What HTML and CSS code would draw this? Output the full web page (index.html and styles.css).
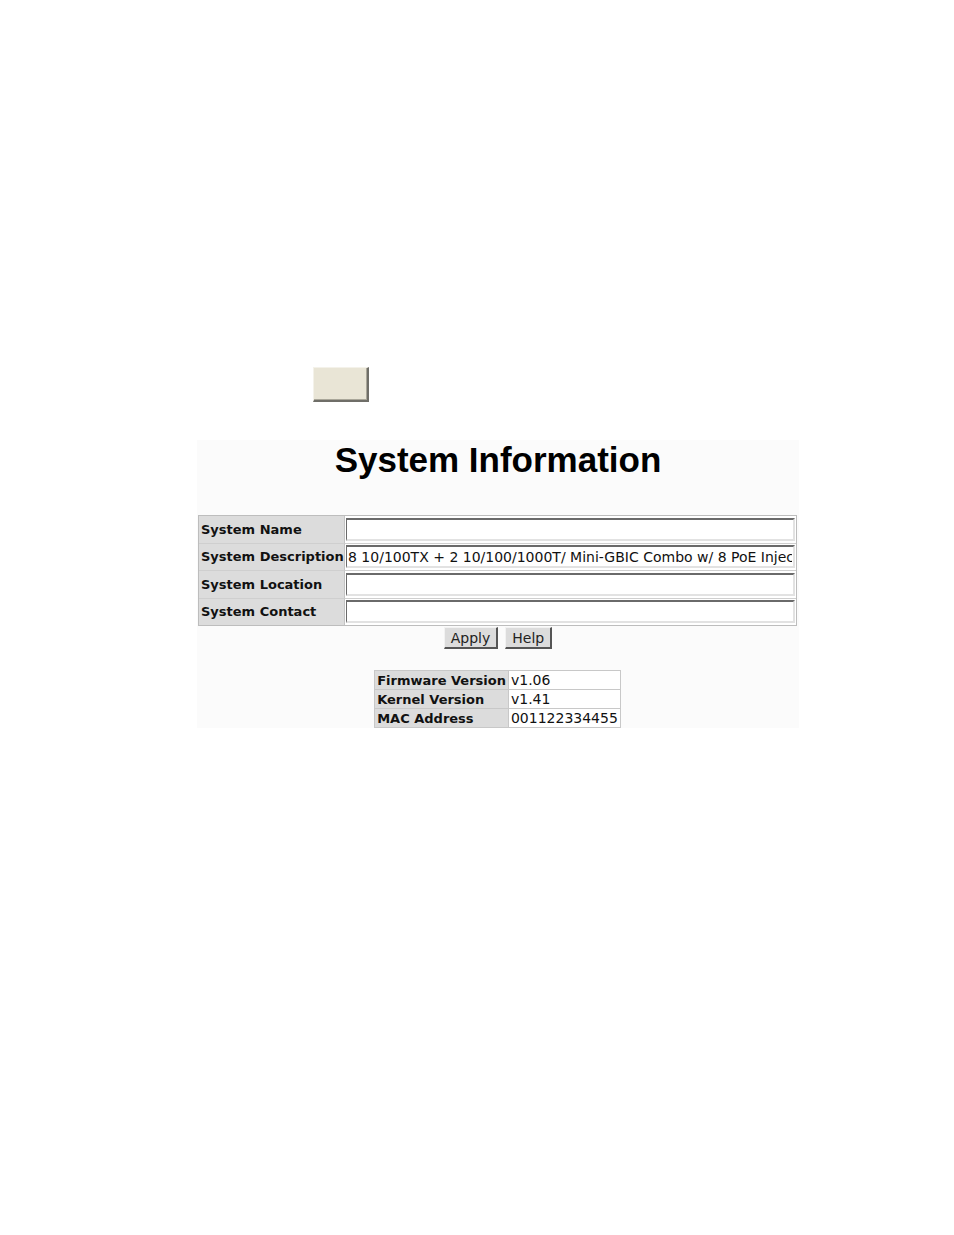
FILE: index.html
```html
<!DOCTYPE html>
<html>
<head>
<meta charset="utf-8">
<link rel="stylesheet" href="styles.css">
</head>
<body>
<div class="page">
  <div class="top-row"><button class="blank-btn" type="button"></button></div>
  <div class="panel">
    <h1 class="title">System Information</h1>
    <table class="sys">
      <tr><td class="lbl">System Name</td><td class="val"><input class="field" type="text" value=""></td></tr>
      <tr><td class="lbl">System Description</td><td class="val"><input class="field" type="text" value="8 10/100TX + 2 10/100/1000T/ Mini-GBIC Combo w/ 8 PoE Injector"></td></tr>
      <tr><td class="lbl">System Location</td><td class="val"><input class="field" type="text" value=""></td></tr>
      <tr><td class="lbl">System Contact</td><td class="val"><input class="field" type="text" value=""></td></tr>
    </table>
    <div class="actions">
      <button class="btn" type="button">Apply</button>
      <button class="btn" type="button">Help</button>
    </div>
    <table class="ver">
      <tr><td class="vlbl">Firmware Version</td><td class="vval">v1.06</td></tr>
      <tr><td class="vlbl">Kernel Version</td><td class="vval">v1.41</td></tr>
      <tr><td class="vlbl">MAC Address</td><td class="vval">001122334455</td></tr>
    </table>
  </div>
</div>
</body>
</html>
```
FILE: styles.css
```css
html, body {
  margin: 0;
  padding: 0;
  background: #ffffff;
}
.page {
  width: 954px;
  height: 1235px;
  padding-top: 367px;
  box-sizing: border-box;
  font-family: "DejaVu Sans", Verdana, sans-serif;
}
.top-row {
  display: flex;
  padding-left: 313px;
  height: 35px;
}
.blank-btn {
  width: 56px;
  height: 35px;
  background: #e9e5d6;
  border: 0;
  border-left: 1px solid #f4f2ea;
  border-top: 1px solid #f4f2ea;
  border-right: 2px solid #6f6e68;
  border-bottom: 2px solid #6f6e68;
  box-shadow: inset -1px -1px 0 #a9a699;
  padding: 0;
}
.panel {
  margin-top: 38px;
  margin-left: 197px;
  width: 602px;
  height: 288px;
  background: #fbfbfb;
  display: flex;
  flex-direction: column;
  align-items: center;
}
.title {
  margin: 0;
  height: 75px;
  font-family: "Liberation Sans", Arial, sans-serif;
  font-weight: bold;
  font-size: 35px;
  line-height: 40px;
  color: #000;
}
.sys {
  border-collapse: separate;
  border-spacing: 0;
  border: 1px solid #bdbdbd;
  width: 599px;
  align-self: flex-start;
  margin-left: 1px;
}
.sys td {
  height: 26.5px;
  padding: 0;
  border-bottom: 1px solid #cfcfcf;
}
.sys tr:last-child td {
  border-bottom: 0;
}
.lbl {
  width: 143px;
  background: #dcdcdc;
  border-right: 1px solid #c4c4c4;
  font-weight: bold;
  font-size: 13px;
  color: #111;
  padding-left: 2px !important;
  white-space: nowrap;
}
.val {
  background: #ffffff;
  padding-left: 1px !important;
}
.field {
  display: block;
  box-sizing: border-box;
  width: 449px;
  height: 23px;
  margin: 0;
  border: 2px solid;
  border-color: #6a6a6a #e2e2e2 #e2e2e2 #6a6a6a;
  border-left-width: 1px;
  background: #fff;
  font-family: "DejaVu Sans", Verdana, sans-serif;
  font-size: 14px;
  color: #111;
  padding: 0 1px;
  outline: none;
}
.actions {
  display: flex;
  gap: 7px;
  margin-top: 1px;
  height: 43px;
  align-items: flex-start;
}
.btn {
  height: 22px;
  padding: 0 6px;
  background: #dcdcdc;
  border: 0;
  border-left: 1px solid #f2f2f2;
  border-top: 1px solid #f2f2f2;
  border-right: 2px solid #555;
  border-bottom: 2px solid #555;
  font-family: "DejaVu Sans", Verdana, sans-serif;
  font-size: 14px;
  color: #222;
  line-height: 18px;
}
.ver {
  border-collapse: collapse;
  border: 1px solid #c4c4c4;
  font-size: 13px;
  margin-left: -1px;
}
.ver td {
  height: 18px;
  padding: 0 2px;
  border: 1px solid #c8c8c8;
  white-space: nowrap;
}
.vlbl {
  background: #dcdcdc;
  font-weight: bold;
  color: #111;
  width: 128px;
  padding-left: 2px !important;
}
.vval {
  background: #fff;
  color: #111;
  font-size: 14px;
  width: 102px;
}
```
